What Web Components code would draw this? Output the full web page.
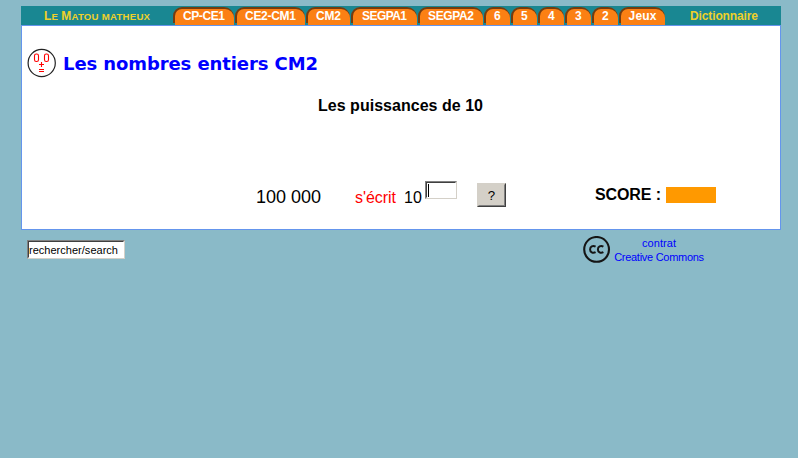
<!DOCTYPE html>
<html lang="fr"><head><meta charset="utf-8"><title>Le Matou matheux</title>
<style>
html,body{margin:0;height:100%;background:#8abac8}
body{font-family:"Liberation Sans",Arial,sans-serif;overflow:hidden}
</style></head><body>
<matou-page></matou-page>
<script>
// Single-line text whose letter spacing is tuned so that it fills the width in its "w" attribute.
customElements.define('fit-text', class extends HTMLElement{
  constructor(){super();this.attachShadow({mode:'open'}).innerHTML='<style>:host{display:inline-block;white-space:pre}span{display:inline-block}</style><span><slot></slot></span>';}
  connectedCallback(){
    const w=parseFloat(this.getAttribute('w')),s=this.shadowRoot.querySelector('span');
    this.style.width=w+'px';
    const n=this.textContent.length,m=s.getBoundingClientRect().width;
    if(n>1&&m)s.style.letterSpacing=((w-m)/(n-1)).toFixed(3)+'px';
  }
});
customElements.define('nav-tab', class extends HTMLElement{
  constructor(){super();this.attachShadow({mode:'open'}).innerHTML=`<style>
:host{display:block;box-sizing:border-box;height:18px;padding:2px 0 0 2px;background:linear-gradient(#743c10 16px,#198792 16px);border-radius:9px 10px 0 0;margin-right:1px;flex:none}
div{height:16px;background:#fb8014;border-radius:7px 9px 0 0;color:#fff;font:bold 12px/14px "Liberation Sans",Arial,sans-serif;display:flex;justify-content:center}
::slotted(*){position:relative;left:-.5px}
</style><div><slot></slot></div>`;}
});
customElements.define('nav-bar', class extends HTMLElement{
  constructor(){super();
    const tabs=[['CP-CE1',61,42],['CE2-CM1',70,51],['CM2',44,25],['SEGPA1',66,45],['SEGPA2',65,46],['6',26,7],['5',26,7],['4',26,7],['3',26,7],['2',26,7],['Jeux',46,28]];
    this.attachShadow({mode:'open'}).innerHTML=`<style>
:host{display:flex;height:19px;background:#198792;box-sizing:border-box;padding-top:1px;color:#efd02a;font:bold 12px/16px "Liberation Sans",Arial,sans-serif}
.brand{width:129px;padding-left:23px;text-transform:uppercase;font-size:9.6px;font-weight:bold;line-height:18px}
.brand b{font-size:12px}
.dico{margin-left:24px;line-height:18px}
</style><div class="brand"><fit-text w="106"><b>L</b>e <b>M</b>atou matheux</fit-text></div>${
tabs.map(t=>`<nav-tab style="width:${t[1]}px"><fit-text w="${t[2]}">${t[0]}</fit-text></nav-tab>`).join('')
}<div class="dico"><fit-text w="68">Dictionnaire</fit-text></div>`;}
});
customElements.define('matou-face', class extends HTMLElement{
  constructor(){super();this.attachShadow({mode:'open'}).innerHTML=`<style>:host{display:block;width:30px;height:30px}svg{display:block}</style>
<svg width="30" height="30" viewBox="0 0 30 30" fill="none"><circle cx="14.7" cy="15" r="13.6" stroke="#222" stroke-width="1.2"/>
<g stroke="#f00" stroke-width="1.1"><rect x="7.5" y="6" width="4" height="7.5" rx="1.8"/><rect x="17.5" y="6" width="4" height="7.5" rx="1.8"/><path d="M12 16.5h5M14.5 14v5M12 21.5h5M12 23.5h5"/></g></svg>`;}
});
customElements.define('cc-logo', class extends HTMLElement{
  constructor(){super();this.attachShadow({mode:'open'}).innerHTML=`<style>:host{display:block;width:28px;height:28px}svg{display:block}</style>
<svg width="28" height="28" viewBox="0 0 28 28" fill="none"><circle cx="13.6" cy="13.4" r="12.4" stroke="#151515" stroke-width="2.1"/>
<g stroke="#151515" stroke-width="2"><path d="M12.6 10.6C9.8 9 7.1 10.6 7.1 13.4S9.8 17.7 12.6 16.2M20.4 10.6C17.6 9 14.9 10.6 14.9 13.4S17.6 17.7 20.4 16.2"/></g></svg>`;}
});
// Sunken text box, classic desktop style.
customElements.define('inset-box', class extends HTMLElement{
  constructor(){super();this.attachShadow({mode:'open'}).innerHTML=`<style>
:host{display:block;box-sizing:border-box;background:#fff;border:1px solid;border-color:#808080 #d4d0c8 #d4d0c8 #808080}
div{box-sizing:border-box;height:100%;border:1px solid;border-color:#404040 #fff #fff #404040;color:#000}
i{display:block;width:1px;height:13px;background:#000;margin:1px 0 0 1px}:host(:not([caret])) i{display:none}
</style><div><i></i><slot></slot></div>`;}
});
customElements.define('raised-button', class extends HTMLElement{
  constructor(){super();this.attachShadow({mode:'open'}).innerHTML=`<style>
:host{display:block;box-sizing:border-box;width:29px;height:24px;border:1px solid;border-color:#d4d0c8 #404040 #404040 #d4d0c8}
div{height:20px;border:1px solid;border-color:#d4d0c8 #808080 #808080 #d4d0c8;background:#d4d0c8;text-align:center;font:13.3px/21px "Liberation Sans",Arial,sans-serif;color:#000}
</style><div><slot></slot></div>`;}
});
customElements.define('exercise-panel', class extends HTMLElement{
  constructor(){super();this.attachShadow({mode:'open'}).innerHTML=`<style>
:host{display:block;box-sizing:border-box;height:205px;background:#fff;border:1px solid #6495ed;color:#000}
.head{display:flex;padding:22px 0 0 5px;height:30px}
.head fit-text{margin-left:6px;font:bold 18px/32px "DejaVu Sans",Verdana,sans-serif;color:#00f}
.sub{padding:18px 0 0 296px;height:20px;font:bold 16px/20px "Liberation Sans",Arial,sans-serif}
.row{display:flex;padding:65px 0 0 234px;font-size:16px;line-height:20px;align-items:flex-start}
.n{font-size:18px;margin-top:6px}.r{color:#f00;margin:7px 0 0 34px}.t{margin:7px 0 0 8px}
inset-box{width:32px;height:18px;margin-left:3px}
raised-button{margin:2px 0 0 20px}
.s{font-weight:bold;margin:4px 0 0 89px}.bar{width:50px;height:16px;background:#f90;margin:6px 0 0 5px}
</style>
<div class="head"><matou-face></matou-face><fit-text w="255">Les nombres entiers CM2</fit-text></div>
<div class="sub"><fit-text w="165">Les puissances de 10</fit-text></div>
<div class="row"><fit-text class="n" w="65">100 000</fit-text><fit-text class="r" w="41">s'écrit</fit-text><fit-text class="t" w="18">10</fit-text><inset-box caret></inset-box><raised-button>?</raised-button><fit-text class="s" w="66">SCORE :</fit-text><div class="bar"></div></div>`;}
});
customElements.define('page-footer', class extends HTMLElement{
  constructor(){super();this.attachShadow({mode:'open'}).innerHTML=`<style>
:host{display:flex;padding:6px 0 0 6px;align-items:flex-start}
inset-box{width:98px;height:19px;margin-top:4px;font:11px/16px "Liberation Sans",Arial,sans-serif}
cc-logo{margin-left:458px}
.l{margin:0 0 0 2.5px;width:91px;text-align:center;color:#00f;font:11px/14px "Liberation Sans",Arial,sans-serif}
.l fit-text{display:block;margin:0 auto}
</style><inset-box><fit-text w="89">rechercher/search</fit-text></inset-box><cc-logo></cc-logo><div class="l"><fit-text w="34">contrat</fit-text><fit-text w="90">Creative Commons</fit-text></div>`;}
});
customElements.define('matou-page', class extends HTMLElement{
  constructor(){super();this.attachShadow({mode:'open'}).innerHTML=`<style>:host{display:block;width:760px;padding:6px 0 0 21px}</style><nav-bar></nav-bar><exercise-panel></exercise-panel><page-footer></page-footer>`;}
});
</script></body></html>
